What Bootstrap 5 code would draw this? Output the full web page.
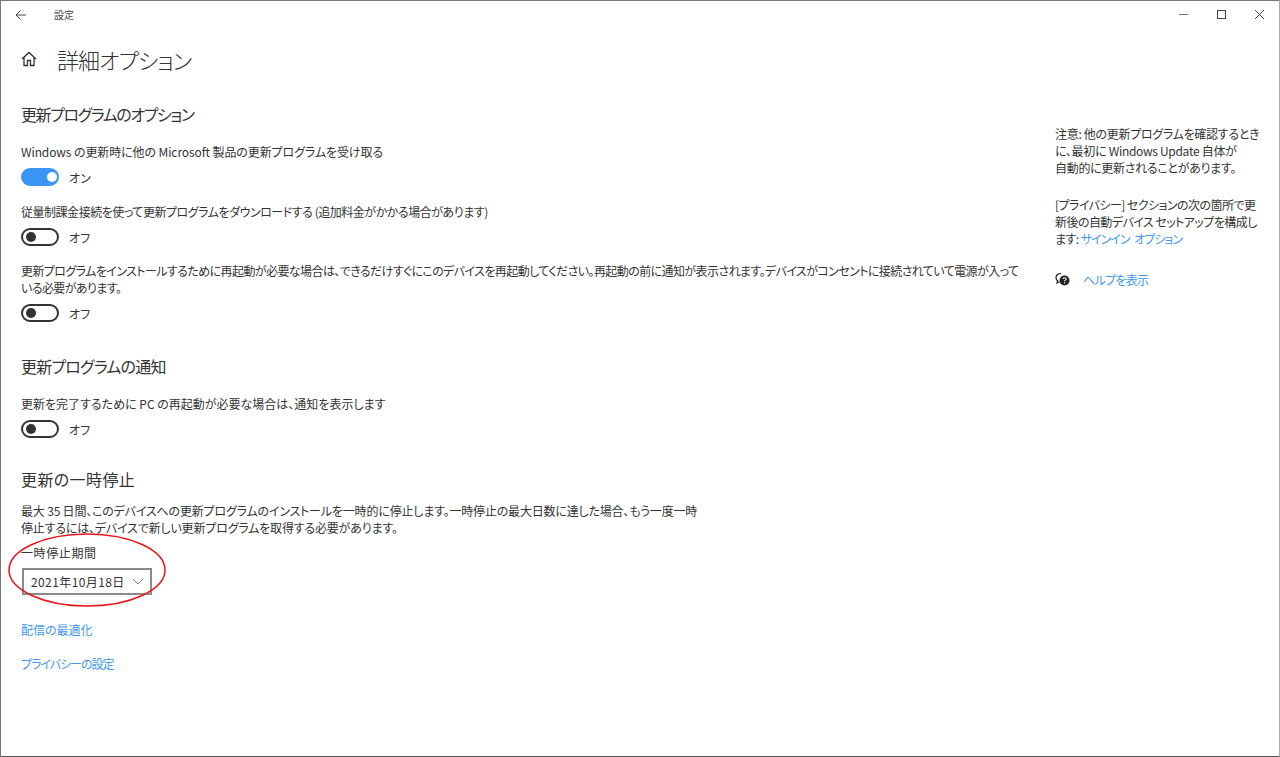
<!DOCTYPE html>
<html lang="ja">
<head>
<meta charset="utf-8">
<title>設定</title>
<link href="https://cdn.jsdelivr.net/npm/bootstrap@5.3.0/dist/css/bootstrap.min.css" rel="stylesheet">
<style>
html,body{height:757px;overflow:hidden;background:#fff}
body{font-family:"Noto Sans CJK JP","Liberation Sans",sans-serif;font-size:12px;line-height:17px;color:#333;font-feature-settings:"palt"}
.win{height:757px;border:1px solid #777;border-right-color:#aaa;border-bottom-color:#555;position:relative}
.tbar{height:27px;padding-left:14px}
.tbar-name{margin-left:27px;font-size:10px;color:#444}
.wbtns{gap:27px;padding-right:14px}
.layout{padding-left:20px;padding-right:14px}
.main-col{width:1004px;flex:none}
.side-col{width:210px;flex:none;margin-left:30px;padding-top:97px;letter-spacing:-.3px}
.page-title{font-size:22px;font-weight:300;line-height:30px;margin:0;color:#333;letter-spacing:-.9px}
.title-row{gap:20px;height:34px;margin-top:14px}
.sec-h{font-size:16px;font-weight:400;line-height:22px;margin:0;color:#333}
.ls-h1{letter-spacing:-1.4px}
.ls-h2{letter-spacing:-.8px}
.ls-h3{letter-spacing:.4px}
.ls-l1{letter-spacing:-.1px}
.ls-l2{letter-spacing:-.47px}
.ls-l3{letter-spacing:-.58px}
.ls-l5{letter-spacing:-.18px}
.ls-per{letter-spacing:.6px}
.ls-lnk{letter-spacing:-1px}
.ls-side2{letter-spacing:-.55px}
.ls-sign{letter-spacing:-1px;word-spacing:3px}
.ls-help{letter-spacing:-.7px}
.ls-date{letter-spacing:.4px}
.lbl{margin:0}
.sw-row{height:18px;gap:10px;margin-top:8px}
.tgl{width:38px;height:18px;border-radius:9px;border:2px solid #333;background:#fff;position:relative;display:block;flex:none}
.tgl::after{content:"";position:absolute;width:10px;height:10px;border-radius:50%;background:#333;left:3px;top:2px}
.tgl-on{background:#3a96f5;border-color:#3a96f5}
.tgl-on::after{background:#fff;left:24px}
.lnk{color:#3f97f0;text-decoration:none}
.dd{width:130px;height:27px;border:2px solid #8a8a8a;padding:0 6px 0 7px;margin-top:7px;margin-left:1px;color:#333}
.circ{position:absolute;left:7px;top:531px}
.section-a{margin-top:27px}
.mt-a{margin-top:18px}
.mt-b{margin-top:17px}
.mt-b2{margin-top:16px}
.mt-c{margin-top:33px}
.mt-c2{margin-top:30px}
.mt-a2{margin-top:12px}
.mt-d{margin-top:8px}
.mt-e{margin-top:26px}
.mt-f{margin-top:17px}
.mt-g{margin-top:20px}
.pause-txt{width:690px}
.help-row{gap:13px;margin-top:24px}
</style>
</head>
<body>
<div class="win">
  <div class="tbar d-flex align-items-center justify-content-between">
    <div class="d-flex align-items-center">
      <svg width="12" height="12" viewBox="0 0 12 12" fill="none" stroke="#444" stroke-width="1"><path d="M11 6H1M5.500 1.500 1 6l4.500 4.500"/></svg>
      <span class="tbar-name">設定</span>
    </div>
    <div class="wbtns d-flex align-items-center">
      <svg width="11" height="11" viewBox="0 0 11 11" stroke="#777" fill="none"><path d="M1 5.500h9"/></svg>
      <svg width="11" height="11" viewBox="0 0 11 11" stroke="#444" fill="none"><rect x="1.500" y="1.500" width="8" height="8"/></svg>
      <svg width="11" height="11" viewBox="0 0 11 11" stroke="#444" fill="none"><path d="M1 1l9 9M10 1l-9 9"/></svg>
    </div>
  </div>
  <div class="layout d-flex">
    <div class="main-col">
      <div class="title-row d-flex align-items-center">
        <svg width="16" height="16" viewBox="0 0 16 16" fill="none" stroke="#333" stroke-width="1.300"><path d="M1 8 8 1.500 15 8M3 6.500V14.500H6.500V9.500H9.500V14.500H13V6.500"/></svg>
        <h1 class="page-title">詳細オプション</h1>
      </div>
      <h2 class="sec-h section-a ls-h1">更新プログラムのオプション</h2>
      <p class="lbl mt-a ls-l1">Windows の更新時に他の Microsoft 製品の更新プログラムを受け取る</p>
      <div class="sw-row d-flex align-items-center"><span class="tgl tgl-on"></span><span>オン</span></div>
      <p class="lbl mt-b ls-l2">従量制課金接続を使って更新プログラムをダウンロードする (追加料金がかかる場合があります)</p>
      <div class="sw-row d-flex align-items-center"><span class="tgl"></span><span>オフ</span></div>
      <p class="lbl mt-b2 ls-l3">更新プログラムをインストールするために再起動が必要な場合は、できるだけすぐにこのデバイスを再起動してください。再起動の前に通知が表示されます。デバイスがコンセントに接続されていて電源が入って<br>いる必要があります。</p>
      <div class="sw-row d-flex align-items-center"><span class="tgl"></span><span>オフ</span></div>
      <h2 class="sec-h mt-c ls-h2">更新プログラムの通知</h2>
      <p class="lbl mt-a">更新を完了するために PC の再起動が必要な場合は、通知を表示します</p>
      <div class="sw-row d-flex align-items-center"><span class="tgl"></span><span>オフ</span></div>
      <h2 class="sec-h mt-c2 ls-h3">更新の一時停止</h2>
      <p class="lbl mt-a2 pause-txt ls-l5">最大 35 日間、このデバイスへの更新プログラムのインストールを一時的に停止します。一時停止の最大日数に達した場合、もう一度一時<br>停止するには、デバイスで新しい更新プログラムを取得する必要があります。</p>
      <p class="lbl mt-d ls-per">一時停止期間</p>
      <div class="dd d-flex align-items-center justify-content-between">
        <span class="ls-date">2021年10月18日</span>
        <svg width="12" height="7" viewBox="0 0 12 7" fill="none" stroke="#888"><path d="M1 1l5 5 5-5"/></svg>
      </div>
      <p class="lbl mt-e"><a class="lnk" href="#">配信の最適化</a></p>
      <p class="lbl mt-f"><a class="lnk ls-lnk" href="#">プライバシーの設定</a></p>
    </div>
    <aside class="side-col">
      <p class="lbl">注意: 他の更新プログラムを確認するとき<br>に、最初に Windows Update 自体が<br>自動的に更新されることがあります。</p>
      <p class="lbl mt-g ls-side2">[プライバシー] セクションの次の箇所で更<br>新後の自動デバイス セットアップを構成し<br>ます: <a class="lnk ls-sign" href="#">サインイン オプション</a></p>
      <div class="d-flex align-items-center help-row">
        <svg width="15" height="15" viewBox="0 0 15 15"><path d="M6 1.500C3 1.500 1 3.300 1 5.700c0 1.300.6 2.400 1.600 3.100L2 11l2.500-1.300" fill="none" stroke="#222" stroke-width="1.200"/><circle cx="9.500" cy="8.500" r="5" fill="#222"/><path d="M8 7c.2-1.700 3.200-1.700 3.200 0 0 1.200-1.700 1.100-1.700 2.300M9.500 10.300v1.200" fill="none" stroke="#fff" stroke-width="1.100"/></svg>
        <a class="lnk ls-help" href="#">ヘルプを表示</a>
      </div>
    </aside>
  </div>
  <svg class="circ" width="160" height="78" viewBox="0 0 160 78" fill="none"><ellipse cx="79" cy="38" rx="78" ry="36" stroke="#e8141c" stroke-width="1.500"/></svg>
</div>
<script src="https://cdn.jsdelivr.net/npm/bootstrap@5.3.0/dist/js/bootstrap.bundle.min.js"></script>
</body>
</html>
